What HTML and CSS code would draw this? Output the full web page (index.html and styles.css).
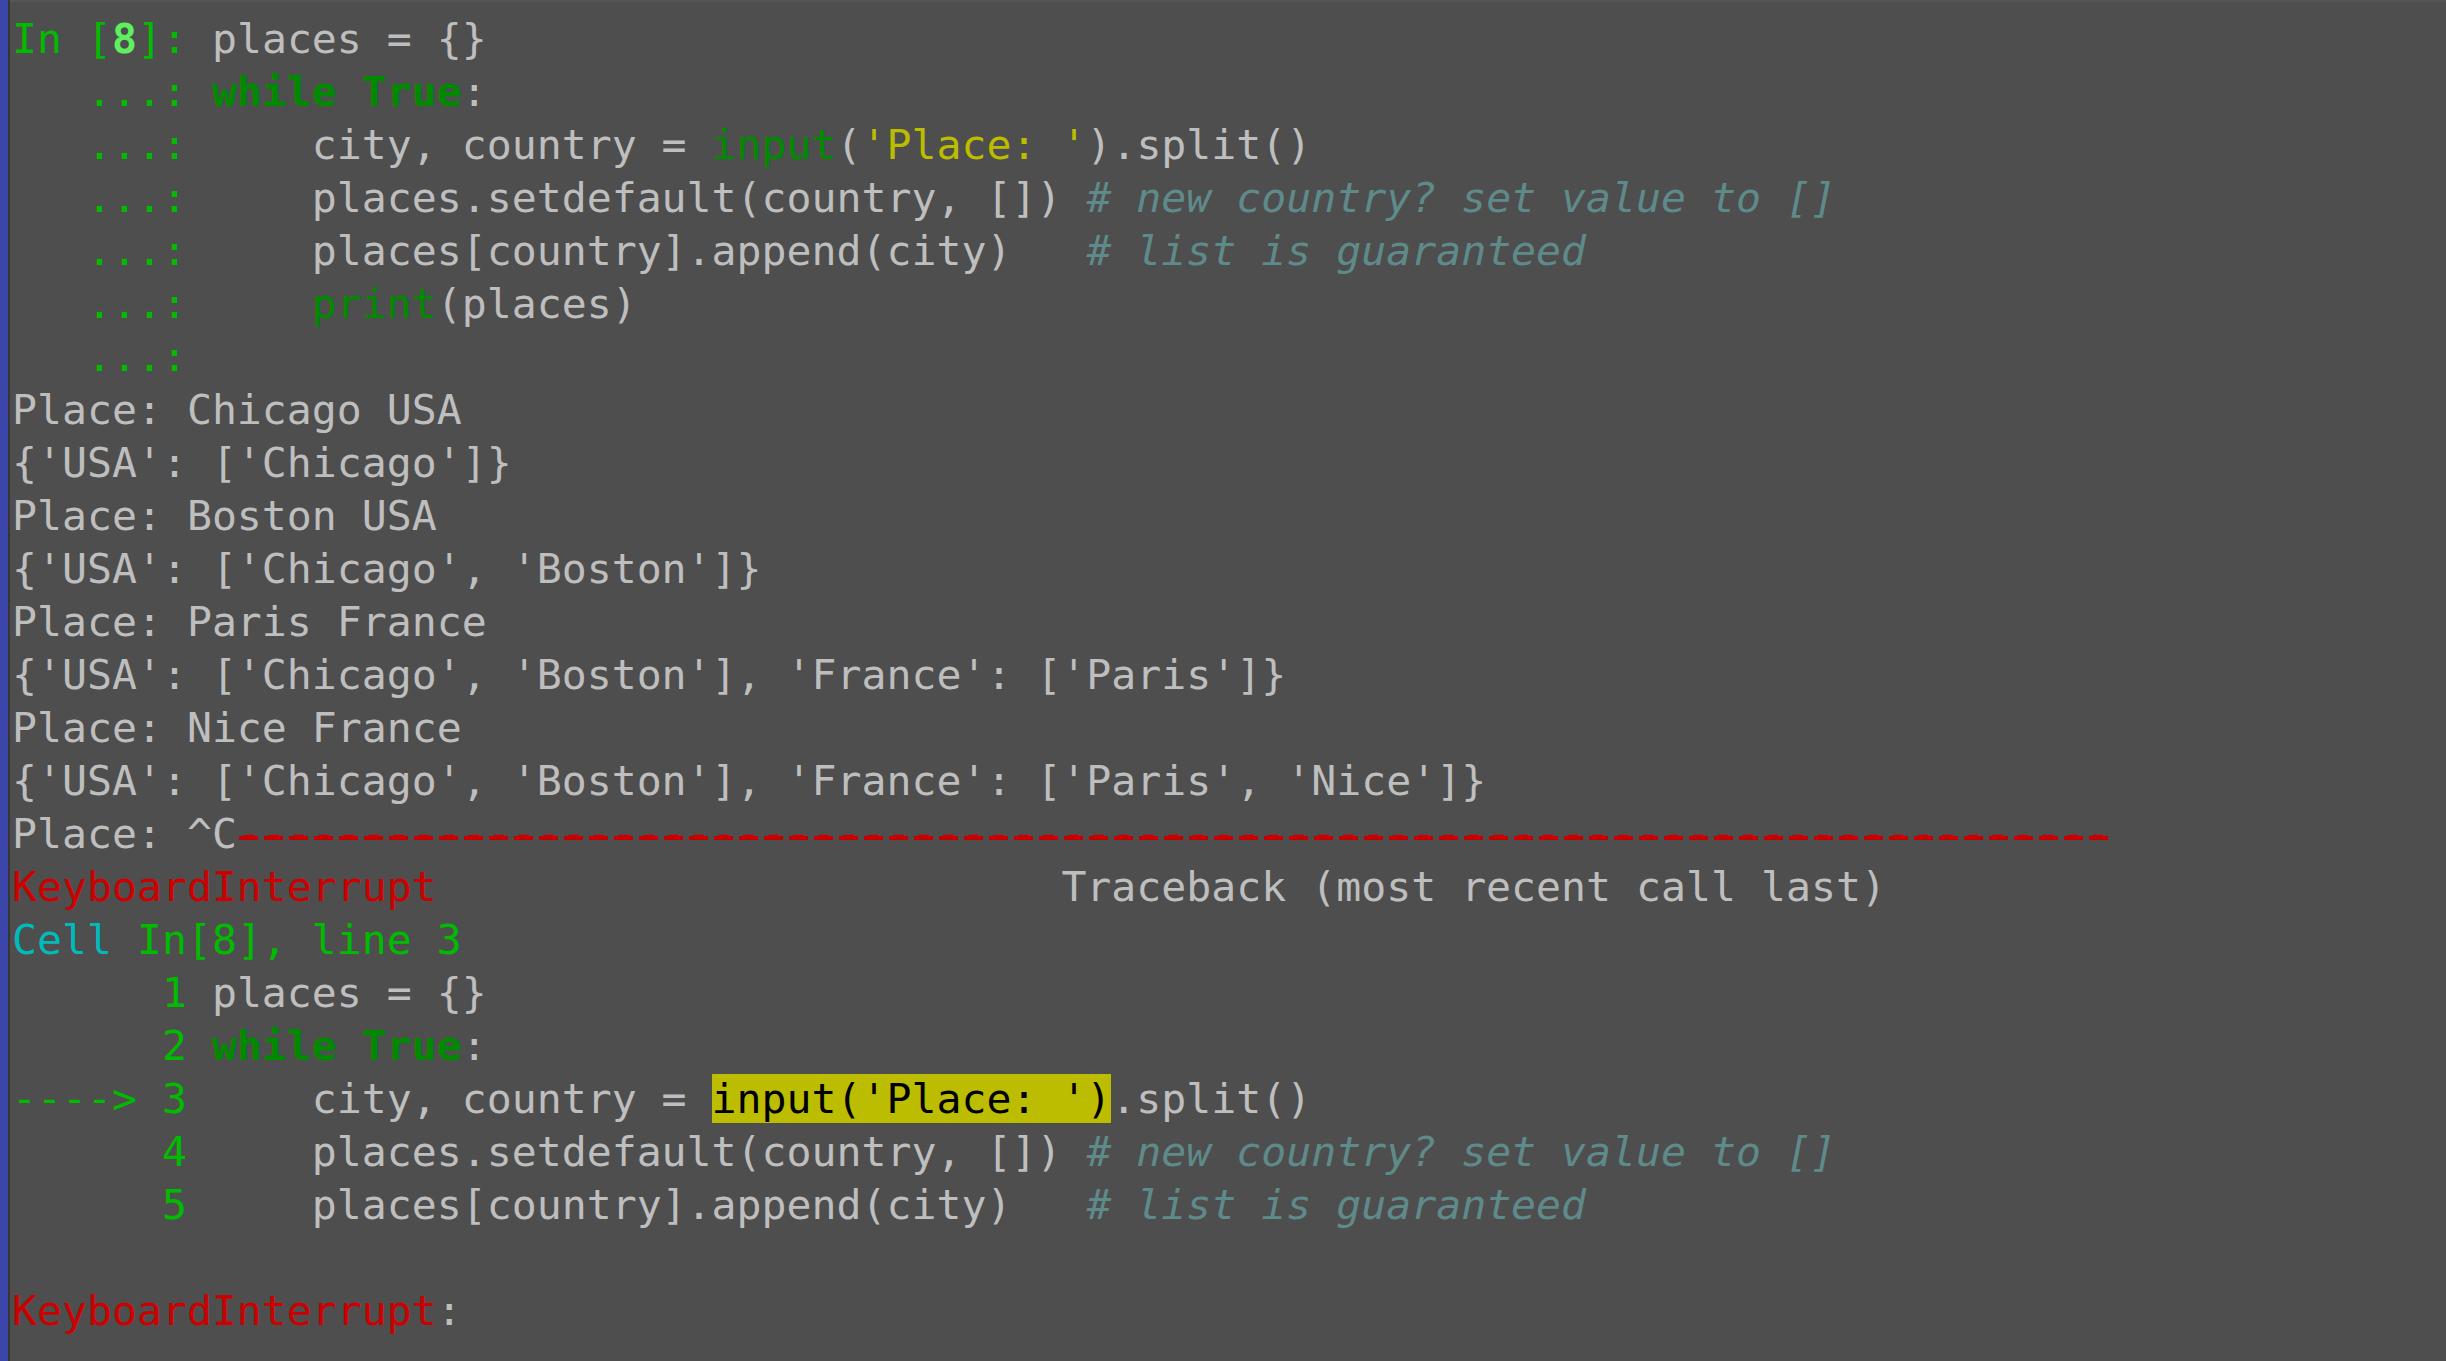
FILE: index.html
```html
<!DOCTYPE html>
<html lang="en">
<head>
<meta charset="utf-8">
<title>IPython terminal</title>
<link rel="stylesheet" href="styles.css">
</head>
<body>
<div class="window">
  <div class="gutter"></div>
  <div class="terminal">
<pre class="screen"><span class="pr">In [</span><span class="prn">8</span><span class="pr">]: </span>places = {}
<span class="pr">   ...: </span><span class="kw">while</span> <span class="kw">True</span>:
<span class="pr">   ...: </span>    city, country = <span class="bi">input</span>(<span class="str">'Place: '</span>).split()
<span class="pr">   ...: </span>    places.setdefault(country, []) <span class="cm"># new country? set value to []</span>
<span class="pr">   ...: </span>    places[country].append(city)   <span class="cm"># list is guaranteed</span>
<span class="pr">   ...: </span>    <span class="bi">print</span>(places)
<span class="pr">   ...: </span>
Place: Chicago USA
{'USA': ['Chicago']}
Place: Boston USA
{'USA': ['Chicago', 'Boston']}
Place: Paris France
{'USA': ['Chicago', 'Boston'], 'France': ['Paris']}
Place: Nice France
{'USA': ['Chicago', 'Boston'], 'France': ['Paris', 'Nice']}
Place: ^C<span class="err rule">---------------------------------------------------------------------------</span>
<span class="err">KeyboardInterrupt</span>                         Traceback (most recent call last)
<span class="cy">Cell</span> <span class="pr">In[8], line 3</span>
<span class="pr">      1 </span>places = {}
<span class="pr">      2 </span><span class="kw">while</span> <span class="kw">True</span>:
<span class="pr">----&gt; 3 </span>    city, country = <span class="hl">input('Place: ')</span>.split()
<span class="pr">      4 </span>    places.setdefault(country, []) <span class="cm"># new country? set value to []</span>
<span class="pr">      5 </span>    places[country].append(city)   <span class="cm"># list is guaranteed</span>

<span class="err">KeyboardInterrupt</span>: 
</pre>
  </div>
</div>
</body>
</html>
```

FILE: styles.css
```css
html, body {
  margin: 0;
  padding: 0;
  height: 100%;
  background: #4e4e4e;
}

.window {
  display: flex;
  height: 100%;
  background: #4e4e4e;
}

.gutter {
  width: 8px;
  flex: 0 0 8px;
  background: #3b45aa;
  border-right: 2px solid #363636;
}

.terminal {
  flex: 1;
  border-top: 2px solid #565656;
  padding: 10px 0 0 2px;
  overflow: hidden;
}

.screen {
  margin: 0;
  font-family: "DejaVu Sans Mono", "Liberation Mono", monospace;
  font-size: 41.5px;
  line-height: 53px;
  color: #bebebe;
  white-space: pre;
}

.pr { color: #00bb00; }
.prn { color: #5ff05f; font-weight: bold; }
.kw { color: #008a00; font-weight: bold; }
.bi { color: #008a00; }
.str { color: #bdbd00; }
.cm { color: #5f8a8a; font-style: italic; }
.err { color: #cc0000; }
.cy { color: #00bbbb; }
.hl { background: #bcbc00; color: #000000; }

.rule {
  background-image: repeating-linear-gradient(to right, #c40000 0, #c40000 19px, transparent 19px, transparent 25px);
  background-repeat: no-repeat;
  background-size: 100% 4px;
  background-position: 2px 27px;
}
```
